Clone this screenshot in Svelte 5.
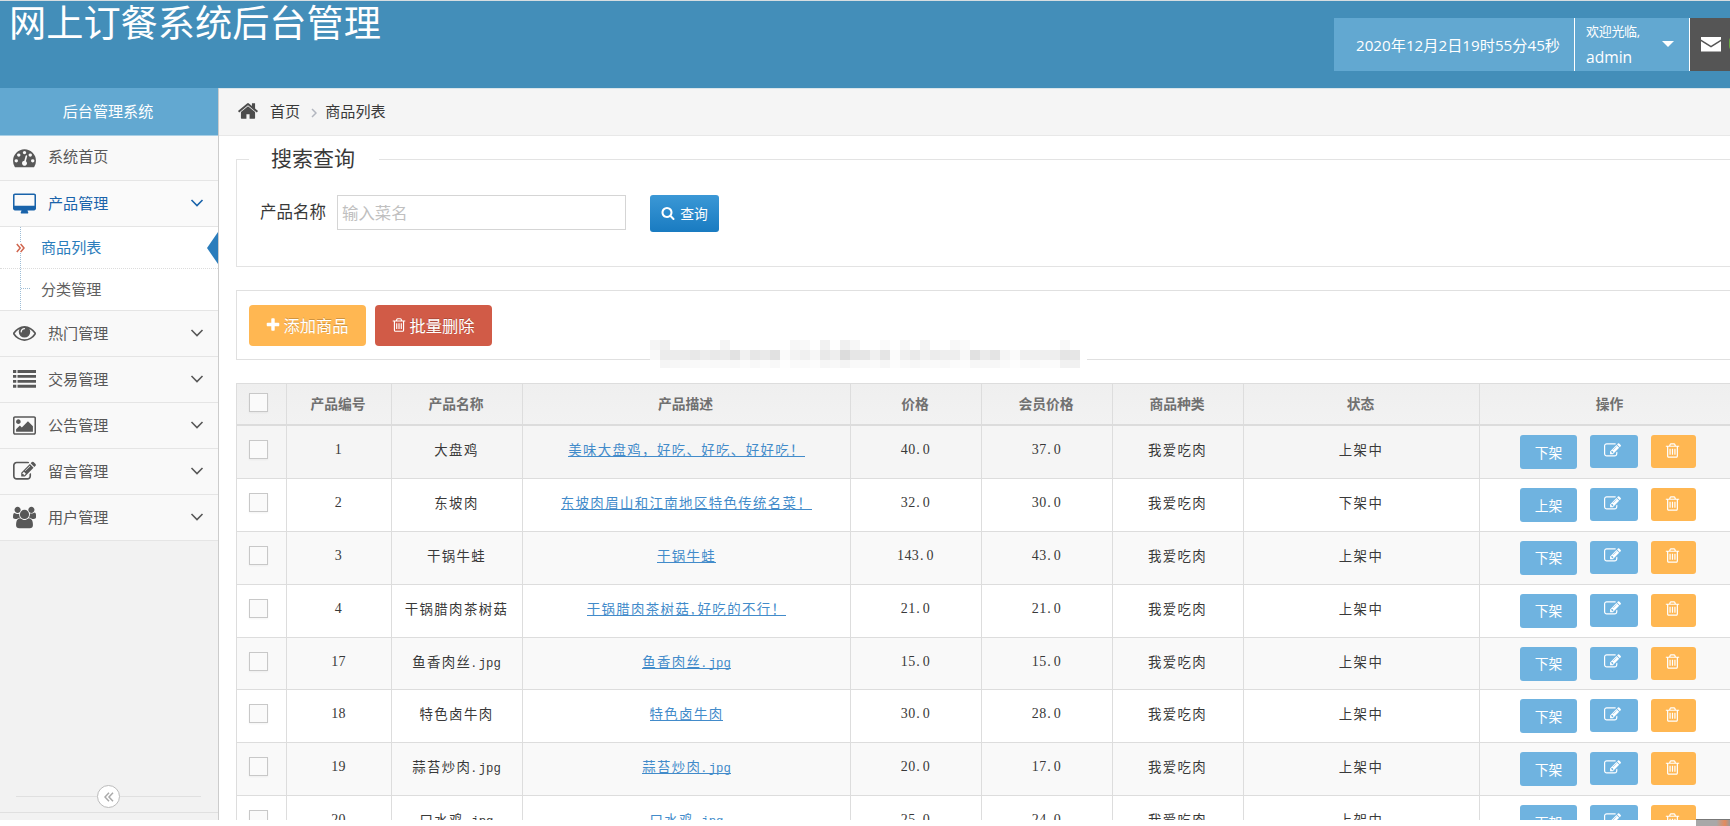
<script>
  const icons = {
    home: ['0 0 1792 1792', 'M1472 992v480q0 26-19 45t-45 19h-384v-384h-256v384h-384q-26 0-45-19t-19-45v-480q0-1 .5-3t.5-3l575-474 575 474q1 2 1 6zm223-69l-62 74q-8 9-21 11h-3q-13 0-21-7l-692-577-692 577q-12 8-24 7-13-2-21-11l-62-74q-8-10-7-23.5t11-21.5l719-599q32-26 76-26t76 26l244 204v-195q0-14 9-23t23-9h192q14 0 23 9t9 23v408l219 182q10 8 11 21.5t-7 23.5z'],
    dashboard: ['0 0 1792 1792', 'M384 1152q0-53-37.5-90.5t-90.5-37.5-90.5 37.5-37.5 90.5 37.5 90.5 90.5 37.5 90.5-37.5 37.5-90.5zm192-448q0-53-37.5-90.5t-90.5-37.5-90.5 37.5-37.5 90.5 37.5 90.5 90.5 37.5 90.5-37.5 37.5-90.5zm428 481l101-382q6-26-7.5-48.5t-38.5-29.5-48 6.5-30 39.5l-101 382q-60 5-107 43.5t-63 98.5q-20 77 20 146t117 89 146-20 89-117q16-60-6-117t-72-91zm660-33q0-53-37.5-90.5t-90.5-37.5-90.5 37.5-37.5 90.5 37.5 90.5 90.5 37.5 90.5-37.5 37.5-90.5zm-640-640q0-53-37.5-90.5t-90.5-37.5-90.5 37.5-37.5 90.5 37.5 90.5 90.5 37.5 90.5-37.5 37.5-90.5zm448 192q0-53-37.5-90.5t-90.5-37.5-90.5 37.5-37.5 90.5 37.5 90.5 90.5 37.5 90.5-37.5 37.5-90.5zm320 448q0 261-141 483-19 29-54 29h-1402q-35 0-54-29-141-221-141-483 0-182 71-348t191-286 286-191 348-71 348 71 286 191 191 286 71 348z'],
    desktop: ['-64 -64 1920 1792', 'M1728 992v-832q0-13-9.5-22.5t-22.5-9.5h-1600q-13 0-22.5 9.5t-9.5 22.5v832q0 13 9.5 22.5t22.5 9.5h1600q13 0 22.5-9.5t9.5-22.5zm128-832v1088q0 66-47 113t-113 47h-544q0 37 16 77.5t32 71 16 43.5q0 26-19 45t-45 19h-512q-26 0-45-19t-19-45q0-14 16-44t32-70 16-78h-544q-66 0-113-47t-47-113v-1088q0-66 47-113t113-47h1600q66 0 113 47t47 113z'],
    eye: ['0 64 1792 1792', 'M1664 960q-152-236-381-353 61 104 61 225 0 185-131.5 316.5t-316.5 131.5-316.5-131.5-131.5-316.5q0-121 61-225-229 117-381 353 133 205 333.5 326.5t434.5 121.5 434.5-121.5 333.5-326.5zm-720-384q0-20-14-34t-34-14q-125 0-214.5 89.5t-89.5 214.5q0 20 14 34t34 14 34-14 14-34q0-86 61-147t147-61q20 0 34-14t14-34zm848 384q0 34-20 69-140 230-376.5 368.5t-499.5 138.5-499.5-139-376.5-368q-20-35-20-69t20-69q140-229 376.5-368t499.5-139 499.5 139 376.5 368q20 35 20 69z'],
    list: ['0 64 1792 1792', 'M0 224h256v224H0zM352 224h1440v224H352zM0 608h256v224H0zM352 608h1440v224H352zM0 992h256v224H0zM352 992h1440v224H352zM0 1376h256v224H0zM352 1376h1440v224H352z'],
    picture: ['-64 0 1920 1792', 'M576 576q0 80-56 136t-136 56-136-56-56-136 56-136 136-56 136 56 56 136zm1024 384v448h-1408v-192l320-320 160 160 512-512zm96-704h-1600q-13 0-22.5 9.5t-9.5 22.5v1216q0 13 9.5 22.5t22.5 9.5h1600q13 0 22.5-9.5t9.5-22.5v-1216q0-13-9.5-22.5t-22.5-9.5zm160 32v1216q0 66-47 113t-113 47h-1600q-66 0-113-47t-47-113v-1216q0-66 47-113t113-47h1600q66 0 113 47t47 113z'],
    edit: ['0 0 1792 1792', 'M888 1184l116-116-152-152-116 116v56h96v96h56zm440-720q-16-16-33 1l-350 350q-17 17-1 33t33-1l350-350q17-17 1-33zm80 594v190q0 119-84.5 203.5t-203.5 84.5h-832q-119 0-203.5-84.5t-84.5-203.5v-832q0-119 84.5-203.5t203.5-84.5h832q63 0 117 25 15 7 18 23 3 17-9 29l-49 49q-14 14-32 8-23-6-45-6h-832q-66 0-113 47t-47 113v832q0 66 47 113t113 47h832q66 0 113-47t47-113v-126q0-13 9-22l64-64q15-15 35-7t20 29zm-96-738l288 288-672 672h-288v-288zm444 132l-92 92-288-288 92-92q28-28 68-28t68 28l152 152q28 28 28 68t-28 68z'],
    users: ['0 0 1920 1792', 'M593 896q-162 5-265 128h-134q-82 0-138-40.5t-56-118.5q0-353 124-353 6 0 43.5 21t97.5 42.5 119 21.5q67 0 133-23-5 37-5 66 0 159 93 293zm1071 637q0 120-73 189.5t-194 69.5h-874q-121 0-194-69.5t-73-189.5q0-53 3.5-103.5t14-109 26.5-108.5 43-97.5 62-81 85.5-53.5 111.5-20q10 0 43 21.5t73 48 107 48 135 21.5 135-21.5 107-48 73-48 43-21.5q61 0 111.5 20t85.5 53.5 62 81 43 97.5 26.5 108.5 14 109 3.5 103.5zm-1024-1277q0 106-75 181t-181 75-181-75-75-181 75-181 181-75 181 75 75 181zm704 384q0 159-112.5 271.5t-271.5 112.5-271.5-112.5-112.5-271.5 112.5-271.5 271.5-112.5 271.5 112.5 112.5 271.5zm576 225q0 78-56 118.5t-138 40.5h-134q-103-123-265-128 93-134 93-293 0-29-5-66 66 23 133 23 59 0 119-21.5t97.5-42.5 43.5-21q124 0 124 353zm-128-609q0 106-75 181t-181 75-181-75-75-181 75-181 181-75 181 75 75 181z'],
    search: ['0 0 1792 1792', 'M1216 832q0-185-131.5-316.5t-316.5-131.5-316.5 131.5-131.5 316.5 131.5 316.5 316.5 131.5 316.5-131.5 131.5-316.5zm512 832q0 52-38 90t-90 38q-54 0-90-38l-343-342q-179 124-399 124-143 0-273.5-55.5t-225-150-150-225-55.5-273.5 55.5-273.5 150-225 225-150 273.5-55.5 273.5 55.5 225 150 150 225 55.5 273.5q0 220-124 399l343 343q37 37 37 90z'],
    trash: ['0 0 1792 1792', 'M704 736v576q0 14-9 23t-23 9h-64q-14 0-23-9t-9-23v-576q0-14 9-23t23-9h64q14 0 23 9t9 23zm256 0v576q0 14-9 23t-23 9h-64q-14 0-23-9t-9-23v-576q0-14 9-23t23-9h64q14 0 23 9t9 23zm256 0v576q0 14-9 23t-23 9h-64q-14 0-23-9t-9-23v-576q0-14 9-23t23-9h64q14 0 23 9t9 23zm128 724v-948h-896v948q0 22 7 40.5t14.5 27 10.5 8.5h832q3 0 10.5-8.5t14.5-27 7-40.5zm-672-1076h448l-48-117q-7-9-17-11h-317q-10 2-17 11zm928 32v64q0 14-9 23t-23 9h-96v948q0 83-47 143.5t-113 60.5h-832q-66 0-113-58.5t-47-141.5v-952h-96q-14 0-23-9t-9-23v-64q0-14 9-23t23-9h309l70-167q15-37 54-63t79-26h320q40 0 79 26t54 63l70 167h309q14 0 23 9t9 23z'],
    plus: ['0 0 1792 1792', 'M1600 736v192q0 40-28 68t-68 28h-416v416q0 40-28 68t-68 28h-192q-40 0-68-28t-28-68v-416h-416q-40 0-68-28t-28-68v-192q0-40 28-68t68-28h416v-416q0-40 28-68t68-28h192q40 0 68 28t28 68v416h416q40 0 68 28t28 68z']
  };

  const menu = [
    { icon: 'eye', label: '热门管理' },
    { icon: 'list', label: '交易管理' },
    { icon: 'picture', label: '公告管理' },
    { icon: 'edit', label: '留言管理' },
    { icon: 'users', label: '用户管理' }
  ];

  const columns = ['产品编号', '产品名称', '产品描述', '价格', '会员价格', '商品种类', '状态', '操作'];

  const rows = [
    ['1', '大盘鸡', '美味大盘鸡，好吃、好吃、好好吃！', '40.0', '37.0', '我爱吃肉', '上架中'],
    ['2', '东坡肉', '东坡肉眉山和江南地区特色传统名菜！', '32.0', '30.0', '我爱吃肉', '下架中'],
    ['3', '干锅牛蛙', '干锅牛蛙', '143.0', '43.0', '我爱吃肉', '上架中'],
    ['4', '干锅腊肉茶树菇', '干锅腊肉茶树菇,好吃的不行！', '21.0', '21.0', '我爱吃肉', '上架中'],
    ['17', '鱼香肉丝.jpg', '鱼香肉丝.jpg', '15.0', '15.0', '我爱吃肉', '上架中'],
    ['18', '特色卤牛肉', '特色卤牛肉', '30.0', '28.0', '我爱吃肉', '上架中'],
    ['19', '蒜苔炒肉.jpg', '蒜苔炒肉.jpg', '20.0', '17.0', '我爱吃肉', '上架中'],
    ['20', '口水鸡.jpg', '口水鸡.jpg', '25.0', '24.0', '我爱吃肉', '上架中']
  ];

  // Splits a cell into runs so that Latin characters keep a half-width pitch.
  function runs(text) {
    return text.match(/[0-9]+|[.,]|[a-z]+|[^0-9.,a-z]+/g).map((t) => ({
      t,
      kind: /[0-9]/.test(t) ? 'num' : /[.,]/.test(t) ? 'dot' : /[a-z]/.test(t) ? 'lat' : 'han'
    }));
  }

  // Grey levels of the pixelated strip, one entry per 10px block.
  const strip = [
    'f5 f0 ff ff ff ff ff f5 ff ff fe ff ff ff f7 f9 ff f2 fe f0 f7 ff ff fa ff f8 ff f4 ff ff f8 fa ff ff ff ff ff ff ff ff ff f9 ff',
    'f9 ec ec ec e8 ed e9 eb e2 f1 e7 ea e1 fa f3 f0 f7 e9 ee dc e6 e6 f0 e5 fb f0 ea f2 ec ee ee f8 e1 eb e4 f5 fa f0 f0 ef ee e5 e6',
    'ff f5 f7 f8 f9 fa f9 f9 f8 fb f8 fb f8 fe fa fa fc f6 f8 f4 f9 f9 fa f6 fc f9 f7 f9 fa f8 fb fc f7 f7 f7 fa fd fa f9 fb fb f1 f1'
  ].flatMap((line) => line.split(' '));
</script>

{#snippet icon(name, cls)}
  <svg class={cls} viewBox={icons[name][0]} fill="currentColor" aria-hidden="true"><path d={icons[name][1]} /></svg>
{/snippet}

{#snippet chevron()}
  <svg class="chev" viewBox="0 0 14 10" fill="none" stroke="currentColor" stroke-width="1.6" aria-hidden="true"><path d="M1.5 2l5.5 5.5L12.5 2" /></svg>
{/snippet}

{#snippet cell(text)}{#each runs(text) as r}<span class={r.kind}>{r.t}</span>{/each}{/snippet}

<div class="page">
  <header>
    <h1>网上订餐系统后台管理</h1>
    <div class="tools">
      <div class="clock">2020年12月2日19时55分45秒</div>
      <div class="user">
        <div><small>欢迎光临,</small><span>admin</span></div>
        <i class="caret"></i>
      </div>
      <div class="mail">
        <svg viewBox="0 0 20 15" aria-hidden="true"><path fill="#fff" d="M0 0h20v2.6L10 8.8 0 2.6z" /><path fill="#fff" d="M0 4.2l10 6.3 10-6.3V14.5H0z" /></svg>
        <i class="badge"></i>
      </div>
    </div>
  </header>

  <div class="body">
    <aside>
      <div class="side-title">后台管理系统</div>
      <div class="item first">{@render icon('dashboard', 'mi')}<span>系统首页</span></div>
      <div class="item open">{@render icon('desktop', 'mi')}<span>产品管理</span>{@render chevron()}</div>
      <div class="sub">
        <div class="subitem active">
          <svg class="dbl" viewBox="0 0 9 10" fill="none" stroke="#d0664f" stroke-width="1.5" aria-hidden="true"><path d="M.8 1l3.4 4L.8 9M4.6 1L8 5 4.6 9" /></svg>
          <span>商品列表</span>
        </div>
        <div class="subitem"><span>分类管理</span></div>
      </div>
      {#each menu as m}
        <div class="item">{@render icon(m.icon, 'mi')}<span>{m.label}</span>{@render chevron()}</div>
      {/each}
      <div class="collapse">
        <div class="knob">
          <svg viewBox="0 0 10 10" fill="none" stroke="#aaa" stroke-width="1.5" aria-hidden="true"><path d="M5 .8L1 5l4 4.2M9 .8L5 5l4 4.2" /></svg>
        </div>
      </div>
    </aside>

    <main>
      <nav>
        {@render icon('home', 'home')}
        <span>首页</span>
        <svg class="sep" viewBox="0 0 6 10" fill="none" stroke="#b2b6bf" stroke-width="1.5" aria-hidden="true"><path d="M1 1l4 4-4 4" /></svg>
        <span>商品列表</span>
      </nav>

      <div class="content">
        <section class="search">
          <h2>搜索查询</h2>
          <div class="form">
            <label for="name">产品名称</label>
            <input id="name" placeholder="输入菜名" />
            <button class="query">{@render icon('search', 'qi')}查询</button>
          </div>
        </section>

        <section class="actions">
          <button class="big add">{@render icon('plus', 'bi')}添加商品</button>
          <button class="big del">{@render icon('trash', 'bi')}批量删除</button>
          <div class="strip">
            {#each strip as g}<i style:background={`#${g}${g}${g}`}></i>{/each}
          </div>
        </section>

        <div class="table">
          <div class="row head">
            <div><i class="box"></i></div>
            {#each columns as c}<div>{c}</div>{/each}
          </div>
          {#each rows as r}
            <div class="row">
              <div><i class="box"></i></div>
              {#each r as c, i}
                <div>{#if i === 2}<a href="#detail">{@render cell(c)}</a>{:else}<p>{@render cell(c)}</p>{/if}</div>
              {/each}
              <div class="ops">
                <button class="toggle">{r[6] === '上架中' ? '下架' : '上架'}</button>
                <button class="edit">{@render icon('edit', 'oi')}</button>
                <button class="remove">{@render icon('trash', 'oi')}</button>
              </div>
            </div>
          {/each}
        </div>
      </div>
    </main>
  </div>
</div>
<div class="foot"><i></i></div>

<style>
  :global(body) { overflow: hidden; background: #fff; }
  * { box-sizing: border-box; }
  .page {
    width: 1730px; height: 820px; overflow: hidden; display: flex; flex-direction: column;
    font: 15.1px/20px 'Open Sans', 'Noto Sans CJK SC', sans-serif; color: #393939;
  }
  h1, h2, p { margin: 0; font-weight: 400; }
  button { border: 0; padding: 0; font-family: inherit; color: #fff; display: flex; align-items: center; justify-content: center; }
  svg { display: block; flex: none; }

  header {
    height: 88px; flex: none; background: #438eb9; border-top: 1px solid #d6dde0;
    display: flex; justify-content: space-between; color: #fff;
  }
  h1 { font-size: 37.2px; line-height: 44px; font-weight: 400; padding-left: 9px; white-space: nowrap; }
  .tools { display: flex; margin-top: 17px; height: 53px; }
  .clock { width: 240px; background: #62a8d1; display: flex; align-items: center; padding-left: 22px; font-size: 15.2px; white-space: nowrap; }
  .user { width: 116px; background: #62a8d1; border: solid #fff; border-width: 0 1px; display: flex; padding-left: 11px; }
  .user > div { display: flex; flex-direction: column; width: 76px; }
  .user small { font-size: 13px; line-height: 16px; margin-top: 5px; letter-spacing: -.3px; }
  .user span { font-size: 15.6px; line-height: 20px; margin-top: 8px; }
  .caret { width: 0; height: 0; border: solid transparent; border-width: 6px 6px 0; border-top-color: #fff; margin-top: 23px; }
  .mail { width: 40px; background: #555; padding: 19px 0 0 11px; display: flex; gap: 8px; overflow: hidden; }
  .mail svg { width: 20px; height: 15px; }
  .badge { flex: none; width: 10px; height: 13px; background: #69aa46; border-radius: 4px; }

  .body { flex: 1; display: flex; min-height: 0; }
  aside { width: 219px; flex: none; background: #f2f2f2; border-right: 1px solid #ccc; display: flex; flex-direction: column; }
  .side-title { height: 48px; flex: none; background: #62a8d1; border-bottom: 1px solid #a9cfe5; color: #fff; text-align: center; line-height: 47px; padding-right: 2px; }
  .item { height: 46px; flex: none; background: #f9f9f9; border-bottom: 1px solid #e5e5e5; display: flex; align-items: center; padding: 0 14px 0 13px; color: #585858; }
  .item.first { height: 45px; padding-bottom: 2px; }
  .item.open { color: #1963aa; background: #fafafa; }
  .item .chev { margin-left: auto; margin-top: -2px; }
  .item > span { margin-left: 13px; line-height: 20px; margin-top: -2px; }
  .item :global(.mi) { width: 23px; height: 23px; margin: 0 -1px 0 0; }
  .chev { width: 14px; height: 10px; }
  .sub {
    background: #fff; border-bottom: 1px solid #e5e5e5; height: 84px; flex: none;
    background-image: repeating-linear-gradient(#9dbdd6 0 1px, #fff 1px 2px); background-size: 1px 100%; background-repeat: no-repeat; background-position: 20px 0;
  }
  .subitem { height: 42px; display: flex; align-items: center; padding: 0 0 2px 41px; color: #616161; position: relative; }
  .subitem:not(.active)::before { content: ''; position: absolute; left: 21px; top: 19px; width: 9px; border-top: 1px dotted #9dbdd6; }
  .subitem.active { color: #2b7dbc; border-bottom: 1px dotted #dcdcdc; }
  .subitem.active::after { content: ''; position: absolute; right: 0; top: 5px; border: solid transparent; border-width: 16px 11px 16px 0; border-right-color: #2b7dbc; }
  .dbl { position: absolute; left: 16px; top: 16px; width: 9px; height: 10px; background: #fff; }
  .collapse {
    margin-top: auto; height: 36px; margin-bottom: 7px; flex: none; border-bottom: 1px solid #e0e0e0; display: flex; align-items: center; padding: 5px 17px 1px 16px;
  }
  .collapse::before, .collapse::after { content: ''; flex: 1; border-top: 1px solid #e0e0e0; }
  .knob { width: 23px; height: 23px; border: 1px solid #bbb; border-radius: 50%; background: #fff; display: flex; align-items: center; justify-content: center; }
  .knob svg { width: 10px; height: 10px; }

  main { flex: 1; min-width: 0; overflow: hidden; }
  nav { height: 48px; background: #f5f5f5; border-top: 1px solid #d9e5ea; border-bottom: 1px solid #e8e8e8; display: flex; align-items: center; padding: 0 0 2px 18px; }
  nav :global(.home) { width: 22px; height: 22px; color: #4c4c4c; margin-right: 11px; }
  .sep { width: 6px; height: 10px; margin: 3px 8px 0 11px; }

  .content { width: 1521px; padding: 23px 0 0 17px; }
  .search { border: 1px solid #e3e3e3; height: 108px; }
  h2 { font-size: 21px; line-height: 30px; width: 130px; margin: -17px 0 0 12px; padding-left: 22px; background: #fff; position: relative; }
  .form { display: flex; padding: 22px 0 0 23px; }
  label { font-size: 16.5px; line-height: 34px; width: 77px; white-space: nowrap; }
  input { width: 289px; height: 35px; border: 1px solid #d5d5d5; padding: 0 4px 1px; font: 16.4px 'Open Sans', 'Noto Sans CJK SC', sans-serif; }
  input::placeholder { color: #c0c0c0; opacity: 1; }
  .query { margin-left: 24px; width: 69px; height: 37px; border-radius: 3px; background: linear-gradient(#3b98d6, #197bc1); font-size: 13.8px; gap: 5px; padding-bottom: 1px; }
  .query :global(.qi) { width: 14px; height: 14px; }

  .actions { margin-top: 23px; height: 70px; border: 1px solid #e0e0e0; display: flex; padding: 14px 0 0 12px; gap: 9px; position: relative; }
  .big { width: 117px; height: 41px; border-radius: 4px; font-size: 16.3px; gap: 2px; padding: 0 1px 1px 0; text-shadow: 0 -1px 0 rgba(0, 0, 0, .2); }
  .big :global(.bi) { width: 16px; height: 16px; }
  .add { background: #ffb752; }
  .del { background: #d15b47; }
  .strip { position: absolute; left: 413px; top: 49px; padding: 0 7px 0 0; background: #fff; display: grid; grid-template-columns: repeat(43, 10px); grid-template-rows: 10px 10px 8px; }

  .table { margin-top: 23px; border: 1px solid #ddd; border-width: 1px 0 0 1px; }
  .row { display: grid; grid-template-columns: 50px 105px 131px 328px 131px 131px 131px 236px 262px; height: 52.86px; border-bottom: 1px solid #ddd; background: #fff; }
  .row:nth-child(even) { background: #f9f9f9; }
  .row:nth-child(2) { background: #f5f5f5; }
  .row > div { border-right: 1px solid #ddd; display: flex; justify-content: center; padding-top: 14px; }
  .row > div:first-child { justify-content: flex-start; padding-left: 12px; }
  .row.head { height: 42.2px; border-bottom: 2px solid #dcdcdc; background: linear-gradient(#efefef, #f2f2f2); font-size: 13.8px; font-weight: 700; color: #707070; }
  .row.head > div { padding: 10px 2px 0 0; }
  .row.head > div:first-child { padding: 9px 0 0 12px; }
  .box { width: 19px; height: 19px; border: 1px solid #c8c8c8; background: #fafafa; box-shadow: 0 1px 2px rgba(0, 0, 0, .05); }
  p, a { font-size: 0; line-height: 20px; white-space: nowrap; }
  p { padding-right: 1px; }
  a { color: #428bca; height: 17px; border-bottom: 1px solid #428bca; text-decoration: none; }
  .han { font-size: 13.4px; letter-spacing: 1.4px; }
  .num, .dot { font-family: 'Liberation Serif', serif; font-size: 14px; }
  .num { letter-spacing: .35px; }
  .dot { letter-spacing: 3.1px; margin-left: .75px; }
  .lat { font-family: 'Liberation Mono', monospace; font-size: 12.3px; }
  .row > .ops { justify-content: flex-start; padding: 9px 0 0 40px; }
  .ops button { height: 33px; border-radius: 3px; background: #6fb3e0; font-size: 13.8px; }
  .ops .toggle { width: 57px; height: 34px; padding-bottom: 1px; margin-right: 13px; }
  .ops .edit { width: 48px; margin-right: 13px; padding-right: 3px; }
  .ops .remove { width: 45px; background: #ffb752; padding-right: 3px; }
  .ops :global(.oi) { width: 17px; height: 17px; margin-top: -3px; }

  .foot { height: 6px; display: flex; justify-content: flex-end; background: #fff; }
  .foot i { width: 34px; margin-top: -1px; border-top: 1px solid #777; background: linear-gradient(90deg, #a8a8a8 60%, #e58a5c 85%, #999); }
</style>
